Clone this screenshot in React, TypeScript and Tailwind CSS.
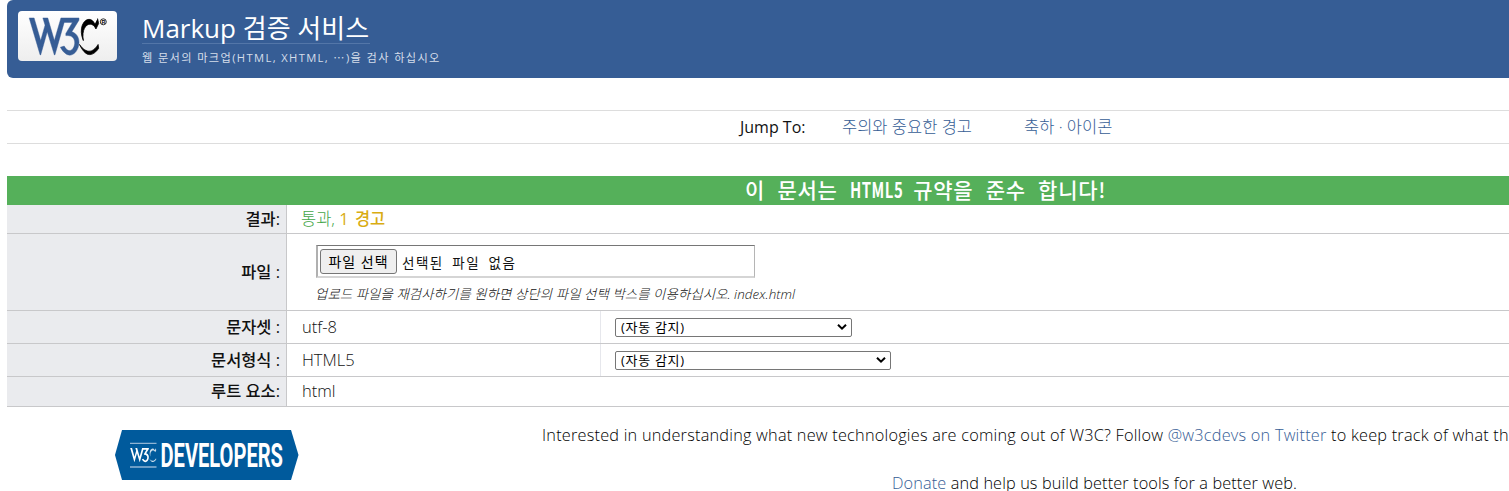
import type { ReactNode } from "react";

const W3C_BLUE =
  "M36,5l12,41l12-41h33v4l-13,21c30,10,2,69-21,28l7-2c15,27,33,-22,3,-19v-4l12-20h-15l-17,59h-1l-13-42l-12,42h-1l-20-67h9l12,41l8-28l-4-13h9";
const W3C_BLACK =
  "M94,53c15,32,30,14,35,7l-1-7c-16,26-32,3-34,0M122,16c-10-21-34,0-21,30c-5-30 16,-38 23,-21l5-10l-2-9";

function W3CLogo() {
  return (
    <svg width="99" height="50" viewBox="0 0 99 50" className="block" aria-label="W3C">
      <g transform="translate(10.1 4.2) scale(0.547 0.552)">
        <path d={W3C_BLUE} fill="#365d95" stroke="#365d95" strokeWidth="0.8" />
        <path d={W3C_BLACK} fill="#000" stroke="#000" strokeWidth="1.4" />
      </g>
      <circle cx="85.3" cy="10.8" r="3" fill="none" stroke="#000" strokeWidth="0.8" />
      <text x="83.4" y="12.8" fontSize="5.4" fontWeight="700" fontFamily="Liberation Sans">
        R
      </text>
    </svg>
  );
}

function DevelopersBadge() {
  return (
    <svg width="185" height="50" viewBox="0 0 185 50" className="block">
      <polygon points="8,0 177,0 184.500,25 177,50 8,50 1,25" fill="#005a9c" />
      <path d="M16 13.300H42.500M16 37H42.500" stroke="#8fb4d3" strokeWidth="1.300" />
      <g transform="translate(15.800 17) scale(0.205 0.210)" fill="#fff">
        <path d={W3C_BLUE} />
        <path d={W3C_BLACK} opacity="0.8" />
      </g>
      <text
        x="46.500"
        y="37"
        fontFamily="Roboto, sans-serif"
        fontWeight="700"
        fontSize="33.500"
        textLength="122.500"
        lengthAdjust="spacingAndGlyphs"
        fill="#fff"
      >
        DEVELOPERS
      </text>
    </svg>
  );
}

function Row({ label, height, children }: { label: string; height: string; children: ReactNode }) {
  return (
    <div className={"flex border-b border-[#c8c8ca] " + height}>
      <div className="flex w-[280px] shrink-0 items-center justify-end border-r border-[#c8c8ca] bg-[#eaebee] pr-[6px] text-[16.4px] leading-none font-medium text-[#111]">
        {label}
      </div>
      {children}
    </div>
  );
}

function Select({ width }: { width: string }) {
  return (
    <div className="flex flex-1 items-center border-l border-[#e6e7ec] pl-[14px]">
      <button
        className={
          "flex h-[19px] items-center justify-between rounded-[2px] border border-[#767676] bg-white pr-[4px] pl-[5px] text-[13px] leading-[17px] tracking-[0.7px] whitespace-nowrap text-black " +
          width
        }
      >
        <span>(자동 감지)</span>
        <svg width="10" height="8" viewBox="0 0 10 8" className="block">
          <path d="M1 1.700L5 5.700L9 1.700" fill="none" stroke="#000" strokeWidth="2" />
        </svg>
      </button>
    </div>
  );
}

export default function App() {
  return (
    <div
      lang="ko"
      className="h-[491px] w-full overflow-hidden bg-white pl-[7px] font-['Open_Sans','Noto_Sans_CJK_KR',sans-serif] text-[#111]"
    >
      <header className="flex h-[78px] rounded-l-[6px] bg-[#365d95] pt-[11px] pl-[11px]">
        <div className="h-[50px] w-[99px] shrink-0 rounded-[4px] bg-linear-to-b from-white to-[#eeeeee]">
          <W3CLogo />
        </div>
        <div className="ml-[25px]">
          <h1 className="h-[33px] w-[228px] border-b border-[#5376a8] text-[26px] leading-[34px] whitespace-nowrap text-white">
            Markup 검증 서비스
          </h1>
          <p className="mt-[4px] text-[11.2px] leading-[18px] tracking-[1.37px] whitespace-nowrap text-[#d5deea]">
            웹 문서의 마크업(HTML, XHTML, <span className="font-['Noto_Sans_CJK_KR']">⋯</span>)을 검사 하십시오
          </p>
        </div>
      </header>

      <nav className="mt-[32px] flex h-[34px] items-center border-y border-[#dddddd] pl-[733px] text-[16.5px] leading-none whitespace-nowrap">
        <span className="w-[102px] text-[16px] font-medium text-[#111]">Jump To:</span>
        <a className="w-[182px] font-light text-[#365d95]">주의와 중요한 경고</a>
        <a className="font-light text-[#365d95]">축하 · 아이콘</a>
      </nav>

      <h2 className="mt-[32px] h-[29px] bg-[#55b05a] pl-[738px] font-['Noto_Sans_CJK_KR',sans-serif] text-[21px] leading-[26px] font-medium tracking-[0.7px] whitespace-nowrap text-white [word-spacing:5.8px]">
        이 문서는{" "}
        <span className="inline-block w-[51px] origin-left scale-x-[0.71] font-bold">HTML5</span>{" "}
        규약을 준수 합니다!
      </h2>

      <Row label="결과:" height="h-[29px]">
        <div className="flex items-center pl-[14px] text-[16.5px] leading-none whitespace-pre">
          <span className="font-light text-[#43a648]">통과, </span>
          <span className="text-[#d9ac12]">1 </span>
          <span className="ml-[2px] font-medium text-[#d9ac12]">경고</span>
        </div>
      </Row>

      <Row label="파일 :" height="h-[77px]">
        <div className="pt-[11px] pl-[29px]">
          <div className="flex h-[33px] w-[439px] items-center border-2 border-t border-r border-t-[#767676] border-r-[#b5b5b5] border-b-[#d5d5d5] border-l-[#b0b0b0] pl-[2px] leading-none whitespace-nowrap">
            <button className="h-[25px] w-[77px] rounded-[3px] border border-[#767676] bg-[#efefef] pt-px text-[14px] leading-none tracking-[1px] text-black">
              파일 선택
            </button>
            <span className="ml-[5px] pt-[5px] text-[13.5px] tracking-[1.5px] [word-spacing:3.5px]">
              선택된 파일 없음
            </span>
          </div>
          <p className="mt-[7px] -ml-px text-[13.4px] leading-[18px] font-light tracking-[0.07px] whitespace-nowrap italic">
            업로드 파일을 재검사하기를 원하면 상단의 파일 선택 박스를 이용하십시오. index.html
          </p>
        </div>
      </Row>

      <Row label="문자셋 :" height="h-[33px]">
        <div className="flex w-[313px] items-center pl-[15px] text-[16.5px] leading-none font-light">utf-8</div>
        <Select width="w-[237px]" />
      </Row>
      <Row label="문서형식 :" height="h-[33px]">
        <div className="flex w-[313px] items-center pl-[15px] text-[16.5px] leading-none font-light">HTML5</div>
        <Select width="w-[276px]" />
      </Row>
      <Row label="루트 요소:" height="h-[30px]">
        <div className="flex items-center pl-[15px] text-[16.5px] leading-none font-light">html</div>
      </Row>

      <footer className="flex pl-[107px]">
        <div className="mt-[23px] w-[185px] shrink-0">
          <DevelopersBadge />
        </div>
        <div className="pt-[16px] pl-[243px] text-[16.3px] leading-[24px] font-light whitespace-nowrap text-black">
          <p className="tracking-[0.22px]">
            Interested in understanding what new technologies are coming out of W3C? Follow{" "}
            <a className="text-[#365d95]">@w3cdevs on Twitter</a> to keep track of what the future looks like!
          </p>
          <p className="mt-[28px] ml-[350px] leading-[16px] tracking-[0.12px]">
            <a className="text-[#365d95]">Donate</a> and help us build better tools for a better web.
          </p>
        </div>
      </footer>
    </div>
  );
}
